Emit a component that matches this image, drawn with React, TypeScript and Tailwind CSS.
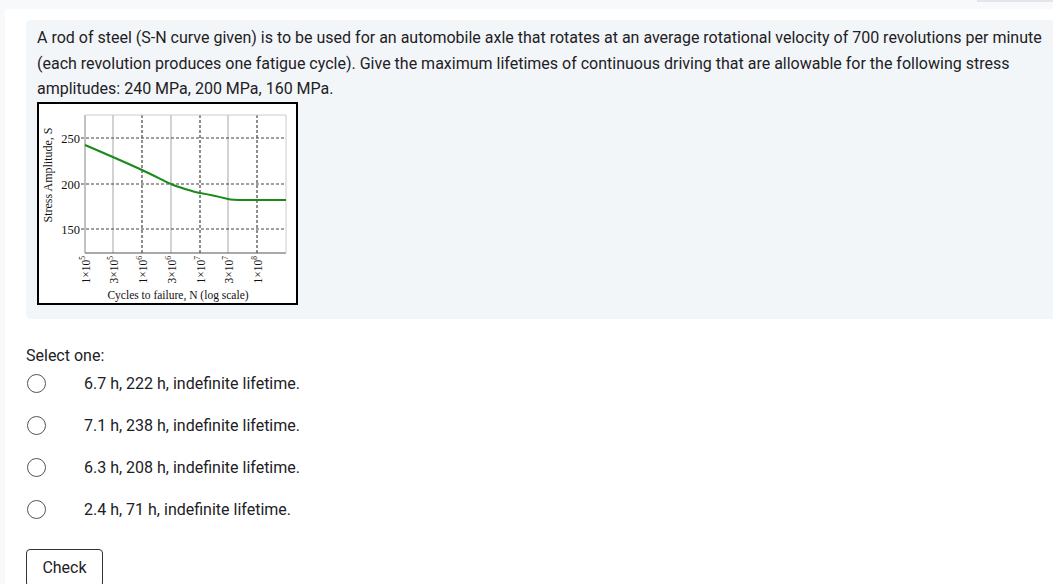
import React from "react";

const options = [
  "6.7 h, 222 h, indefinite lifetime.",
  "7.1 h, 238 h, indefinite lifetime.",
  "6.3 h, 208 h, indefinite lifetime.",
  "2.4 h, 71 h, indefinite lifetime.",
];

const xTicks = [
  { x: 46, base: "1×10", exp: "5" },
  { x: 74, base: "3×10", exp: "5" },
  { x: 103, base: "1×10", exp: "6" },
  { x: 132, base: "3×10", exp: "6" },
  { x: 161, base: "1×10", exp: "7" },
  { x: 189, base: "3×10", exp: "7" },
  { x: 218, base: "1×10", exp: "8" },
];

function SNChart() {
  return (
    <svg width="257" height="199" viewBox="0 0 257 199" className="block">
      <g fontFamily="'Liberation Serif', serif" fill="#111">
        {/* vertical grid */}
        {xTicks.slice(1).map((t, i) =>
          i % 2 === 0 ? (
            <line key={t.x} x1={t.x} y1="11" x2={t.x} y2="149" stroke="#b5b5b5" strokeWidth="1.2" />
          ) : (
            <line key={t.x} x1={t.x} y1="11" x2={t.x} y2="149" stroke="#444" strokeWidth="1.2" strokeDasharray="3 2" />
          )
        )}
        {/* horizontal grid */}
        {[34, 80, 125].map((y) => (
          <line key={y} x1="42" y1={y} x2="247" y2={y} stroke="#444" strokeWidth="1.2" strokeDasharray="3 2" />
        ))}
        {/* axes */}
        <line x1="46" y1="11" x2="46" y2="149" stroke="#999" strokeWidth="1.2" />
        <line x1="46" y1="149" x2="247" y2="149" stroke="#555" strokeWidth="1.2" />
        <line x1="247" y1="11" x2="247" y2="149" stroke="#ccc" strokeWidth="1" />
        <line x1="46" y1="11" x2="247" y2="11" stroke="#ccc" strokeWidth="1" />

        {/* curve */}
        <path
          d="M46 41 C 60 47, 90 60, 103 66 S 125 77, 132 80 S 155 88, 161 89 S 185 94, 189 95 C 193 96, 197 96, 205 96 L 247 96"
          fill="none"
          stroke="#1a8a1a"
          strokeWidth="2.2"
        />

        {/* y ticks */}
        <text x="41" y="38.5" fontSize="12.5" textAnchor="end">250</text>
        <text x="41" y="84.5" fontSize="12.5" textAnchor="end">200</text>
        <text x="41" y="129.5" fontSize="12.5" textAnchor="end">150</text>
        <text transform="translate(13 71) rotate(-90)" fontSize="12" textAnchor="middle">
          Stress Amplitude, S
        </text>

        {/* x ticks */}
        {xTicks.map((t) => (
          <text key={t.x + t.exp} transform={`translate(${t.x + 4.5} 152) rotate(-90)`} fontSize="11.5" textAnchor="end">
            {t.base}
            <tspan fontSize="7.5" dy="-4.5">{t.exp}</tspan>
          </text>
        ))}
        <text x="139" y="195" fontSize="11.5" textAnchor="middle">
          Cycles to failure, N (log scale)
        </text>
      </g>
    </svg>
  );
}

export default function App() {
  return (
    <div className="relative h-[584px] w-[1053px] overflow-hidden bg-[#f8f9fa] font-['Roboto',sans-serif] text-[#1d2125]">
      <div className="absolute right-0 top-0 h-[2px] w-[76px] bg-[#e3e5e8]" />
      <div className="ml-[5px] mt-[9px] min-h-[600px] w-[1100px] bg-white pt-[11px]">
        <div className="ml-[21px] w-[1060px] rounded-[5px] bg-[#f3f6f9] pb-[14px] pl-[11px] pt-[5px]">
          <p className="w-[1012px] text-[16px] leading-[25.5px]">
            A rod of steel (S-N curve given) is to be used for an automobile axle that rotates at an average rotational
            velocity of 700 revolutions per minute (each revolution produces one fatigue cycle). Give the maximum
            lifetimes of continuous driving that are allowable for the following stress amplitudes: 240 MPa, 200 MPa,
            160 MPa.
          </p>
          <div className="w-fit border-2 border-black bg-white">
            <SNChart />
          </div>
        </div>

        <div className="ml-[21px] mt-[25px]">
          <div className="text-[16px] leading-[24px]">Select one:</div>
          <div className="mt-[6px] flex flex-col gap-[23px]">
            {options.map((o) => (
              <label key={o} className="flex h-[19px] items-center">
                <span className="ml-[1px] h-[19px] w-[19px] shrink-0 rounded-full border-[1.5px] border-[#555] bg-white" />
                <span className="ml-[38px] text-[16px] leading-[19px]">{o}</span>
              </label>
            ))}
          </div>
          <button className="mt-[30px] h-[38px] w-[77px] rounded-[4px] border border-[#333] bg-white text-[16px] text-[#1d2125]">
            Check
          </button>
        </div>
      </div>
    </div>
  );
}
